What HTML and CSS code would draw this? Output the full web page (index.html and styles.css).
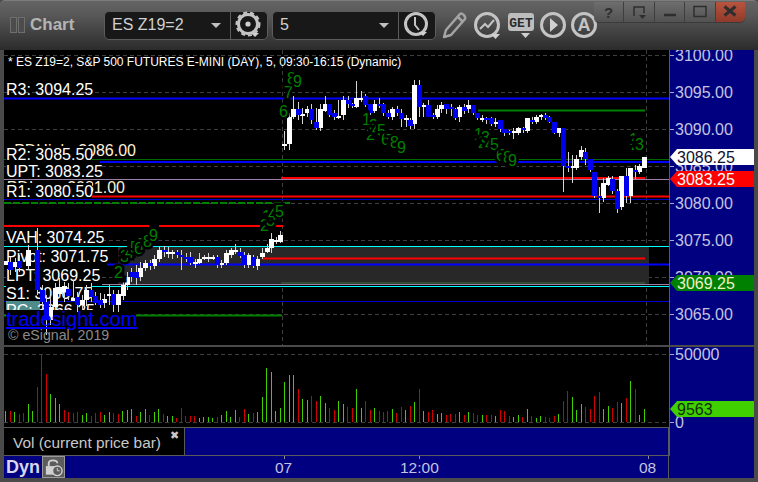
FILE: index.html
```html
<!DOCTYPE html>
<html lang="en">
<head>
<meta charset="utf-8">
<title>Chart</title>
<link rel="stylesheet" href="styles.css">
</head>
<body>
<div class="window">
  <header class="titlebar">
    <div class="grip"><span></span><span></span></div>
    <div class="title">Chart</div>
    <div class="control">
      <div class="field"><span>ES Z19=2</span><i class="caret"></i></div>
      <div class="control-btn">
        <svg class="icon" width="28" height="28" viewBox="0 0 28 28"><circle class="ic" cx="13" cy="13" r="9.5"/><circle class="ic-thin" cx="13" cy="13" r="11.5" stroke-dasharray="4 3"/><circle class="ic-fill" cx="13" cy="13" r="2.6"/><path class="ic-fill" d="M16 22h8l-4 4z"/></svg>
      </div>
    </div>
    <div class="control second">
      <div class="field"><span>5</span><i class="caret"></i></div>
      <div class="control-btn">
        <svg class="icon" width="28" height="28" viewBox="0 0 28 28"><circle class="ic" cx="13" cy="13" r="10.5"/><path class="ic-hand" d="M12 6v8l4 5"/><path class="ic-fill" d="M16 21h8l-4 4z"/></svg>
      </div>
    </div>
    <div class="tools">
      <svg width="28" height="28" viewBox="0 0 28 28"><path class="ic-thin2" d="M3 26l2-7L19 3c2-1.500 6 2 5 5L10 24z"/><path class="ic-thin2" d="M17 6l5 5"/></svg>
      <svg width="32" height="28" viewBox="0 0 32 28"><circle class="ic" cx="15" cy="14" r="11.500"/><path class="ic-hand" d="M8 18l5-5 3 3 6-7"/><path class="ic-fill" d="M19 23h9l-4.500 5z"/></svg>
      <svg width="29" height="28" viewBox="0 0 29 28"><rect class="get-box" x="1" y="2" width="26" height="18" rx="3"/><text class="get-text" x="14" y="16">GET</text><path class="ic-fill" d="M14 22h9l-4.500 5z"/></svg>
      <svg width="28" height="28" viewBox="0 0 28 28"><circle class="ic" cx="14" cy="14" r="11.500"/><path class="ic-fill" d="M11 7l8 7-8 7z"/></svg>
      <svg width="28" height="28" viewBox="0 0 28 28"><circle class="ic" cx="14" cy="14" r="11.500"/><text class="a-text" x="14" y="20">A</text></svg>
    </div>
    <div class="winbtns">
      <div class="winbtn"><span class="q">?</span></div>
      <div class="winbtn"><svg width="16" height="16" viewBox="0 0 16 16"><path class="wb" d="M3 12V3h10v6"/><path class="wb-fill" d="M8 11h7l-3.500 4z"/></svg></div>
      <div class="winbtn"><svg width="16" height="16" viewBox="0 0 16 16"><path class="wb-bold" d="M2 11h12"/></svg></div>
      <div class="winbtn"><svg width="16" height="16" viewBox="0 0 16 16"><path class="wb" d="M2 2.500h12v10H2z"/></svg></div>
      <div class="winbtn close"><svg width="16" height="16" viewBox="0 0 16 16"><path class="wb-x" d="M2.500 2.500l11 9M13.500 2.500l-11 9"/></svg></div>
    </div>
  </header>

  <div class="chart">
    <svg class="pane" width="665" height="295" viewBox="4 50 665 295">
      <g class="grid-dash">
        <path d="M4 55.500H669M4 92.500H669M4 129.500H669M4 166.500H669M4 203.500H669M4 240.500H669M4 277.500H669M4 314.500H669"/>
        <path d="M282.500 50V345M646.500 50V345"/>
      </g>
      <rect class="band" x="118" y="247" width="531" height="38"/>

      <path class="l-blue2" d="M4 98.500H669"/>
      <path class="l-green2" d="M478 110.500H645"/>
      <path class="l-green1" d="M4 159.500H669"/>
      <path class="l-blue2" d="M100 162H669"/>
      <path class="l-red2" d="M281 178H645"/>
      <path class="l-purple" d="M4 179.500H669"/>
      <path class="l-red2" d="M92 196.500H669"/>
      <path class="l-blue1" d="M4 199.500H669"/>
      <path class="l-greendash" d="M4 203H290"/>
      <path class="l-red2" d="M4 226H149M159 226H260M272 226H283"/>
      <path class="l-cyan" d="M4 246.500H669"/>
      <path class="l-red2" d="M262 258.500H645"/>
      <path class="l-blue2" d="M107 264.500H669"/>
      <path class="l-green1b" d="M281 283H645"/>
      <path class="l-purple" d="M100 284.500H669"/>
      <path class="l-cyan" d="M4 286.500H669"/>
      <path class="l-blue1" d="M4 301.500H669"/>
      <path class="l-green2" d="M136 315.500H282M4 315.500H10"/>

      <text class="cap" x="8" y="66">* ES Z19=2, S&amp;P 500 FUTURES E-MINI (DAY), 5, 09:30-16:15 (Dynamic)</text>
      <text class="lab" x="6" y="95">R3: 3094.25</text>

      <text class="lab-under" x="136" y="156">PDHigh: 3086.00</text>
      <text class="lab-under" x="125" y="193">PDLow: 3081.00</text>
      <rect class="mask" x="6" y="146" width="86" height="17"/>
      <rect class="mask" x="6" y="163" width="95" height="16"/>
      <rect class="mask" x="6" y="183" width="86" height="16"/>
      <rect class="mask" x="6" y="227" width="98" height="18"/>
      <rect class="mask" x="6" y="248" width="101" height="19"/>
      <rect class="mask" x="6" y="267" width="96" height="19"/>
      <rect class="mask" x="6" y="286" width="86" height="15"/>
      <rect class="teal" x="6" y="301" width="34" height="9"/>
      <text class="lab" x="6" y="160">R2: 3085.50</text>
      <text class="lab" x="6" y="177">UPT: 3083.25</text>
      <text class="lab" x="6" y="197">R1: 3080.50</text>
      <text class="lab" x="6" y="243">VAH: 3074.25</text>
      <text class="lab" x="6" y="262">Pivot: 3071.75</text>
      <text class="lab" x="6" y="281">LPT: 3069.25</text>
      <text class="lab" x="6" y="299">S1: 3066.75</text>
      <text class="lab" x="6" y="316">PC: 3066.25</text>
      <rect class="mask" x="6" y="310" width="130" height="9"/>

      <path class="wick" d="M10.500 257V275M15.500 258V272M19.500 255V272M28.500 245V270M37.500 228V295M42.500 285V310M46.500 295V335M50.500 296V325M55.500 283V310M59.500 278V298M64.500 282V302M68.500 283V300M73.500 280V300M77.500 292V312M82.500 295V310M86.500 285V306M91.500 283V302M95.500 292V305M100.500 293V308M104.500 294V308M109.500 285V305M113.500 290V312M118.500 290V312M123.500 280V300M127.500 272V290M131.500 268V282M136.500 265V285M140.500 262V281M145.500 260V271M150.500 260V270M154.500 255V269M159.500 246V262M164.500 246V257M168.500 247V258M172.500 250V259M177.500 250V258M181.500 250V270M186.500 253V262M190.500 252V265M195.500 259V268M199.500 253V264M204.500 255V260M208.500 253V262M213.500 255V260M217.500 255V268M221.500 260V268M226.500 250V265M231.500 248V258M235.500 244V254M240.500 248V258M244.500 252V268M248.500 253V268M253.500 255V268M257.500 256V270M262.500 248V259M267.500 244V253M271.500 233V253M276.500 237V244M280.500 231V243M284.500 131V150M289.500 113V150M293.500 96V119M298.500 102V120M302.500 108V124M307.500 106V117M311.500 104V124M316.500 108V130M320.500 104V131M325.500 96V112M329.500 104V117M334.500 110V120M338.500 100V119M343.500 96V120M348.500 96V108M352.500 103V108M356.500 81V108M361.500 91V102M365.500 94V107M370.500 104V115M374.500 100V113M379.500 98V108M383.500 103V116M388.500 110V119M392.500 107V120M397.500 106V116M401.500 109V127M406.500 115V127M410.500 118V129M414.500 80V129M419.500 80V117M423.500 103V117M428.500 100V117M433.500 113V119M437.500 105V119M441.500 102V113M446.500 104V114M451.500 104V116M455.500 108V120M459.500 105V122M464.500 104V114M468.500 100V113M473.500 105V115M477.500 113V120M482.500 115V122M486.500 117V124M491.500 117V126M495.500 118V127M500.500 120V132M504.500 129V136M509.500 130V135M513.500 128V139M518.500 127V135M523.500 127V133M527.500 118V133M532.500 117V124M536.500 115V124M541.500 114V120M545.500 113V120M549.500 116V123M554.500 122V134M559.500 128V137M563.500 128V192M568.500 152V172M572.500 155V183M576.500 155V170M581.500 146V160M585.500 148V165M590.500 159V172M594.500 172V198M599.500 187V213M603.500 178V202M608.500 176V186M612.500 176V194M617.500 189V213M621.500 176V210M626.500 168V203M630.500 168V203M635.500 165V179M639.500 164V174M644.500 157V168"/>
      <path class="body-w" d="M4 261h5V265h-5zM13 262h5V267h-5zM26 250h5V266h-5zM48 307h5V320h-5zM53 288h5V307h-5zM57 287h5V294h-5zM62 286h5V292h-5zM71 298h5V301h-5zM80 300h5V305h-5zM84 290h5V300h-5zM102 299h5V303h-5zM107 294h5V296h-5zM116 294h5V305h-5zM121 285h5V296h-5zM125 277h5V285h-5zM138 268h5V277h-5zM143 263h5V268h-5zM152 259h5V266h-5zM157 250h5V259h-5zM166 252h5V254h-5zM170 252h5V254h-5zM193 262h5V264h-5zM197 259h5V263h-5zM202 257h5V259h-5zM206 257h5V259h-5zM211 257h5V259h-5zM219 263h5V265h-5zM224 253h5V263h-5zM229 250h5V255h-5zM233 250h5V252h-5zM246 255h5V265h-5zM255 259h5V266h-5zM260 253h5V257h-5zM265 248h5V252h-5zM269 239h5V248h-5zM274 240h5V242h-5zM278 235h5V242h-5zM282 144h5V146h-5zM287 117h5V144h-5zM291 109h5V117h-5zM300 114h5V116h-5zM305 109h5V113h-5zM318 109h5V128h-5zM323 104h5V111h-5zM336 116h5V118h-5zM341 100h5V115h-5zM354 98h5V107h-5zM359 98h5V100h-5zM372 104h5V111h-5zM390 109h5V117h-5zM404 118h5V120h-5zM412 85h5V124h-5zM421 105h5V107h-5zM435 109h5V117h-5zM439 105h5V109h-5zM457 107h5V117h-5zM466 105h5V109h-5zM480 118h5V120h-5zM493 122h5V124h-5zM511 131h5V133h-5zM516 128h5V133h-5zM525 118h5V131h-5zM534 117h5V122h-5zM539 115h5V117h-5zM557 128h5V133h-5zM570 166h5V168h-5zM574 159h5V168h-5zM579 150h5V157h-5zM601 183h5V198h-5zM606 178h5V185h-5zM619 176h5V207h-5zM628 168h5V196h-5zM637 166h5V172h-5zM642 157h5V168h-5z"/>
      <path class="body-b" d="M8 262h5V270h-5zM17 261h5V268h-5zM35 250h5V290h-5zM40 290h5V302h-5zM44 302h5V320h-5zM66 289h5V296h-5zM75 297h5V305h-5zM89 290h5V297h-5zM93 296h5V303h-5zM98 300h5V305h-5zM111 294h5V305h-5zM129 272h5V277h-5zM134 272h5V278h-5zM148 263h5V266h-5zM162 250h5V252h-5zM175 252h5V255h-5zM179 255h5V257h-5zM184 257h5V259h-5zM188 257h5V263h-5zM215 257h5V265h-5zM238 252h5V256h-5zM242 255h5V265h-5zM251 257h5V266h-5zM296 109h5V115h-5zM309 109h5V120h-5zM314 122h5V128h-5zM327 104h5V115h-5zM332 113h5V117h-5zM346 100h5V104h-5zM350 104h5V106h-5zM363 96h5V105h-5zM368 104h5V113h-5zM377 104h5V106h-5zM381 104h5V113h-5zM386 113h5V117h-5zM395 109h5V113h-5zM399 113h5V119h-5zM408 120h5V126h-5zM417 85h5V107h-5zM426 105h5V117h-5zM431 115h5V117h-5zM444 104h5V109h-5zM449 107h5V109h-5zM453 109h5V118h-5zM462 107h5V111h-5zM471 105h5V113h-5zM475 113h5V118h-5zM484 118h5V120h-5zM489 118h5V124h-5zM498 120h5V129h-5zM502 129h5V133h-5zM507 131h5V133h-5zM521 128h5V130h-5zM530 120h5V122h-5zM543 115h5V118h-5zM547 117h5V122h-5zM552 122h5V133h-5zM561 128h5V166h-5zM566 166h5V168h-5zM583 152h5V159h-5zM588 159h5V170h-5zM592 172h5V196h-5zM597 196h5V198h-5zM610 179h5V191h-5zM615 191h5V209h-5zM624 176h5V196h-5zM633 170h5V172h-5z"/>

      <g class="td">
        <text x="116" y="280">1</text><text x="114" y="278">2</text><text x="120" y="262">3</text><text x="125" y="258">4</text><text x="130" y="253">5</text><text x="134" y="254">6</text><text x="138" y="250">7</text><text x="143" y="247">8</text><text x="149" y="241">9</text>
        <text x="262" y="222">1</text><text x="260" y="231">2</text><text x="266" y="226">3</text><text x="268" y="220">4</text><text x="275" y="217">5</text>
        <text x="279" y="117">6</text><text x="284" y="98">7</text><text x="287" y="84">8</text><text x="293" y="87">9</text>
        <text x="362" y="125">1</text><text x="366" y="140">2</text><text x="369" y="131">3</text><text x="372" y="135">4</text><text x="377" y="136">5</text><text x="381" y="145">6</text><text x="386" y="146">7</text><text x="390" y="148">8</text><text x="397" y="153">9</text>
        <text x="474" y="140">1</text><text x="478" y="148">2</text><text x="481" y="143">3</text><text x="485" y="150">4</text><text x="490" y="150">5</text><text x="496" y="161">6</text><text x="500" y="161">7</text><text x="503" y="163">8</text><text x="508" y="166">9</text>
        <text x="629" y="145">1</text><text x="631" y="150">2</text><text x="635" y="150">3</text>
      </g>

      <text class="site" x="6" y="326">tradesight.com</text>
      <text class="copy" x="8" y="340">© eSignal, 2019</text>
    </svg>

    <svg class="axis-price" width="85" height="295" viewBox="669 50 85 295">
      <path class="axis-line" d="M669.500 50V345"/>
      <path class="tick" d="M670 55.500h4M670 92.500h4M670 129.500h4M670 166.500h4M670 203.500h4M670 240.500h4M670 277.500h4M670 314.500h4"/>
      <text class="ax" x="675" y="61">3100.00</text>
      <text class="ax" x="675" y="98">3095.00</text>
      <text class="ax" x="675" y="135">3090.00</text>
      <text class="ax" x="675" y="172">3085.00</text>
      <text class="ax" x="675" y="209">3080.00</text>
      <text class="ax" x="675" y="246">3075.00</text>
      <text class="ax" x="675" y="283">3070.00</text>
      <text class="ax" x="675" y="320">3065.00</text>
      <path class="flag-w" d="M670 157l7-8h77v16h-77z"/>
      <text class="ax ax-dark" x="677" y="163">3086.25</text>
      <path class="flag-r" d="M670 179l7-8h77v16h-77z"/>
      <text class="ax ax-white" x="677" y="185">3083.25</text>
      <path class="flag-g" d="M670 283l7-8h77v16h-77z"/>
      <text class="ax ax-pale" x="677" y="289">3069.25</text>
    </svg>

    <div class="sep"></div>

    <svg class="pane-vol" width="665" height="80" viewBox="4 347 665 80">
      <path class="grid-dash-line" d="M4 354.500H669M4 422.500H669"/>
      <path class="v-green" d="M5.500 411V422M14.500 412V422M28.500 404V422M32.500 411V422M50.500 394V422M55.500 398V422M59.500 404V422M82.500 415V422M86.500 413V422M104.500 415V422M109.500 412V422M122.500 411V422M127.500 410V422M131.500 409V422M140.500 412V422M145.500 409V422M154.500 412V422M158.500 409V422M167.500 416V422M172.500 416V422M199.500 418V422M203.500 417V422M208.500 417V422M212.500 418V422M221.500 415V422M226.500 411V422M230.500 417V422M235.500 410V422M248.500 414V422M257.500 412V422M262.500 397V422M266.500 368V422M271.500 372V422M275.500 411V422M280.500 408V422M284.500 382V422M289.500 375V422M293.500 375V422M302.500 399V422M307.500 400V422M320.500 396V422M325.500 403V422M338.500 401V422M343.500 404V422M356.500 389V422M361.500 408V422M374.500 408V422M392.500 409V422M405.500 410V422M414.500 402V422M423.500 411V422M437.500 414V422M441.500 413V422M459.500 412V422M468.500 412V422M482.500 415V422M495.500 416V422M513.500 417V422M518.500 415V422M527.500 409V422M536.500 418V422M540.500 416V422M558.500 414V422M572.500 397V422M576.500 410V422M581.500 404V422M603.500 409V422M608.500 406V422M621.500 403V422M630.500 381V422M639.500 415V422M644.500 409V422"/>
      <path class="v-red" d="M10.500 411V422M19.500 414V422M23.500 413V422M37.500 387V422M41.500 354V422M46.500 374V422M64.500 410V422M68.500 412V422M73.500 413V422M77.500 412V422M91.500 416V422M95.500 413V422M100.500 412V422M113.500 413V422M118.500 414V422M136.500 416V422M149.500 415V422M163.500 414V422M176.500 418V422M181.500 408V422M185.500 416V422M190.500 416V422M194.500 416V422M217.500 417V422M239.500 417V422M244.500 409V422M253.500 413V422M298.500 389V422M311.500 396V422M316.500 401V422M329.500 408V422M334.500 410V422M347.500 407V422M352.500 408V422M365.500 401V422M370.500 410V422M379.500 411V422M383.500 412V422M387.500 411V422M396.500 413V422M401.500 407V422M410.500 406V422M419.500 389V422M428.500 412V422M432.500 410V422M446.500 415V422M450.500 414V422M455.500 414V422M464.500 415V422M473.500 413V422M477.500 415V422M486.500 415V422M491.500 415V422M500.500 410V422M504.500 411V422M509.500 416V422M522.500 417V422M531.500 416V422M545.500 417V422M549.500 418V422M554.500 416V422M563.500 401V422M567.500 391V422M585.500 407V422M590.500 409V422M594.500 396V422M599.500 392V422M612.500 408V422M617.500 402V422M626.500 398V422M635.500 389V422"/>
    </svg>

    <svg class="axis-vol" width="85" height="131" viewBox="669 347 85 131">
      <path class="axis-line" d="M669.500 347V456"/>
      <path class="tick" d="M670 354.500h4M670 422.500h4"/>
      <text class="ax" x="675" y="360">50000</text>
      <text class="ax" x="675" y="428">0</text>
      <path class="flag-v" d="M670 409l7-8h77v16h-77z"/>
      <text class="ax ax-vol" x="677" y="415">9563</text>
    </svg>

    <div class="legend-row">
      <div class="legend">Vol (current price bar)<span class="x">✖</span></div>
      <div class="legend-fill"></div>
    </div>

    <div class="timebar">
      <span class="dyn">Dyn</span>
      <span class="lock">
        <svg width="22" height="21" viewBox="0 0 22 21"><path class="lk" d="M6 9V6c0-4 9-4 9 0"/><path class="lk-fill" d="M3 9h11v9H3z"/><circle class="lk-clock" cx="15" cy="14" r="5"/><path class="lk-hand" d="M15 11v3h2.500"/></svg>
      </span>
      <span class="tk t1">07</span>
      <span class="tk t2">12:00</span>
      <span class="tk t3">08</span>
    </div>
  </div>
</div>
</body>
</html>
```
FILE: styles.css
```css
* { box-sizing: border-box; }
html, body { margin: 0; padding: 0; background: #4a4a4a; }
body { width: 758px; height: 482px; overflow: hidden; font-family: "Liberation Sans", Arial, sans-serif; }
.window { width: 758px; height: 482px; display: flex; flex-direction: column; background: #4a4a4a; }
.titlebar {
  position: relative; height: 50px; display: flex; align-items: center; padding: 0 0 0 10px;
  background: linear-gradient(#646464 0, #585858 14px, #2a2a2a 50px);
  border-top: 1px solid #7c7c7c; border-radius: 5px 5px 0 0;
}
.grip { display: flex; gap: 1px; width: 16px; height: 16px; margin-top: -2px; }
.grip span { width: 7px; height: 16px; border: 1px solid #6e6e6e; background: #4c4c4c; }
.title { margin-left: 4px; width: 74px; font-size: 17px; font-weight: bold; color: #b4b4b4; margin-top: -2px; }
.control {
  width: 164px; height: 29px; display: flex; margin-top: -1px; background: #181818;
  border: 1px solid #5c5c5c; border-radius: 5px; color: #d0d0d0;
}
.control.second { margin-left: 4px; }
.field { flex: 1; display: flex; align-items: center; justify-content: space-between; padding: 0 9px 0 7px; font-size: 16px; }
.caret { width: 0; height: 0; border-left: 5px solid transparent; border-right: 5px solid transparent; border-top: 5px solid #c0c0c0; }
.control-btn { width: 37px; border-left: 1px solid #5c5c5c; display: flex; align-items: center; justify-content: center; }
.icon { display: block; }
.tools { display: flex; align-items: center; gap: 3px; margin-left: 5px; margin-top: -1px; }
.tools svg { display: block; flex: none; }
.ic { fill: none; stroke: #c4c4c4; stroke-width: 3; }
.ic-thin { fill: none; stroke: #c4c4c4; stroke-width: 2; }
.ic-thin2 { fill: none; stroke: #a4a4a4; stroke-width: 2.500; stroke-linejoin: round; }
.ic-hand { fill: none; stroke: #c4c4c4; stroke-width: 2; }
.ic-fill { fill: #d0d0d0; }
.get-box { fill: #bdbdbd; }
.get-text { font: bold 13px "Liberation Mono", monospace; fill: #2c2c2c; text-anchor: middle; }
.a-text { font: bold 18px "Liberation Sans", sans-serif; fill: #c4c4c4; text-anchor: middle; }
.winbtns {
  position: absolute; top: 1px; left: 594px; width: 151px; height: 20px; display: flex;
  border-radius: 0 0 5px 5px; overflow: hidden; box-shadow: 0 1px 0 #3a3a3a;
}
.winbtn {
  flex: 1; display: flex; align-items: center; justify-content: center;
  background: linear-gradient(#6e6e6e, #525252); border-right: 1px solid #3e3e3e;
}
.winbtn.close { background: linear-gradient(#b9543f, #8f3a2a); border-right: 0; }
.q { font-size: 15px; font-weight: bold; color: #2e2e2e; }
.wb { fill: none; stroke: #2e2e2e; stroke-width: 1.500; }
.wb-fill { fill: #2e2e2e; }
.wb-bold { stroke: #2e2e2e; stroke-width: 2.500; }
.wb-x { stroke: #2e2e2e; stroke-width: 3; }

.chart {
  flex: none; width: 750px; height: 428px; margin-left: 4px; display: grid;
  grid-template-columns: 665px 85px; grid-template-rows: 295px 2px 80px 29px 22px;
}
.chart svg { display: block; }
.pane { grid-column: 1; grid-row: 1; background: #000; }
.axis-price { grid-column: 2; grid-row: 1; background: #000080; }
.sep { grid-column: 1 / 3; grid-row: 2; background: #4a4a4a; }
.pane-vol { grid-column: 1; grid-row: 3; background: #000; }
.axis-vol { grid-column: 2; grid-row: 3 / 6; background: #000080; }

.grid-dash path, .grid-dash-line { fill: none; stroke: #3e3e3e; stroke-width: 1; stroke-dasharray: 4 3; }
.band { fill: #282828; }
.l-blue2 { stroke: #0000ff; stroke-width: 2; }
.l-blue1 { stroke: #0000d0; stroke-width: 1; }
.l-green2 { stroke: #008000; stroke-width: 2; }
.l-green1 { stroke: #006800; stroke-width: 1; }
.l-green1b { stroke: #3c6a3c; stroke-width: 1; }
.l-red2 { stroke: #ff0000; stroke-width: 2; }
.l-purple { stroke: #9a80a8; stroke-width: 1; }
.l-cyan { stroke: #00ffff; stroke-width: 1; }
.l-greendash { stroke: #008000; stroke-width: 2; stroke-dasharray: 7 2; }

.cap { font-size: 12px; fill: #fff; }
.lab { font-size: 16px; fill: #fff; }
.lab-under { font-size: 16px; fill: #fff0d8; text-anchor: end; }
.mask { fill: #000; }
.teal { fill: #4e8c8c; }
.wick { fill: none; stroke: #d4d4d4; stroke-width: 1; }
.body-w { fill: #fff; }
.body-b { fill: #0000f0; }
.td text { font-size: 16px; fill: #008000; stroke: #000; stroke-width: 5px; stroke-linejoin: miter; paint-order: stroke; }
.site { font-size: 20px; fill: #0000ff; text-decoration: underline; }
.copy { font-size: 14.200px; fill: #8a8a8a; }

.axis-line { stroke: #5a5a5a; stroke-width: 1; fill: none; }
.tick { stroke: #a8a8c8; stroke-width: 1; fill: none; }
.ax { font-size: 16px; fill: #c4c4e0; }
.ax-dark { fill: #101030; }
.ax-white { fill: #fff; }
.ax-pale { fill: #f0f0c8; }
.ax-vol { fill: #10300a; }
.flag-w { fill: #fff; }
.flag-r { fill: #ff0000; }
.flag-g { fill: #008000; }
.flag-v { fill: #40d000; }
.v-green { stroke: #40d000; stroke-width: 1; fill: none; }
.v-red { stroke: #d00000; stroke-width: 1; fill: none; }

.legend-row {
  grid-column: 1; grid-row: 4; display: flex;
  border-top: 1px solid #5a5a5a; border-bottom: 1px solid #5a5a5a; border-right: 1px solid #5a5a5a;
}
.legend {
  position: relative; width: 180px; background: #000; color: #c8c8c8; font-size: 15.400px;
  padding: 6px 0 0 9px; white-space: nowrap;
}
.x { position: absolute; left: 166px; top: 0; font-size: 11px; color: #c8c8c8; line-height: 14px; }
.legend-fill { flex: 1; background: #000080; border-left: 1px solid #5a5a5a; }
.timebar {
  grid-column: 1; grid-row: 5; position: relative; display: flex; align-items: center;
  background: #000080; border-right: 1px solid #5a5a5a; padding-left: 2px;
}
.dyn { font-size: 18px; font-weight: bold; color: #d8d8e8; width: 36px; }
.lock {
  width: 23px; height: 22px; display: flex; align-items: center; justify-content: center;
  background: #5c5c5c; border: 1px solid #9a9a9a;
}
.lk { fill: none; stroke: #d0d0d0; stroke-width: 2; }
.lk-fill { fill: #d0d0d0; }
.lk-clock { fill: #5c5c5c; stroke: #d0d0d0; stroke-width: 1.500; }
.lk-hand { fill: none; stroke: #d0d0d0; stroke-width: 1; }
.tk { position: absolute; top: 3px; font-size: 15.500px; color: #c4c4e0; }
.tk::before { content: ""; position: absolute; left: 50%; top: -3px; width: 1px; height: 3px; background: #8a8aa8; }
.t1 { left: 271px; }
.t2 { left: 396px; }
.t3 { left: 635px; }
```
